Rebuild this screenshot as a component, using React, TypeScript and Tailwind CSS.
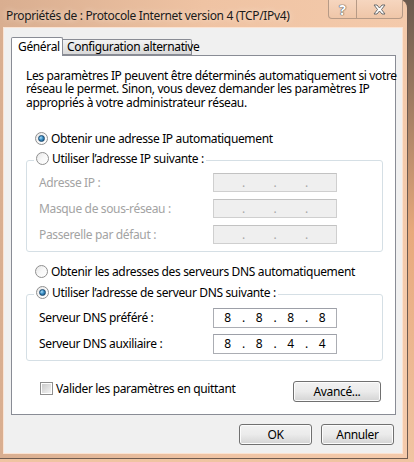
import React from "react";

const font = { fontFamily: '"Noto Sans", "Liberation Sans", sans-serif' };

function Radio({ checked = false }: { checked?: boolean }) {
  return (
    <span className="flex h-[13px] w-[13px] shrink-0 items-center justify-center rounded-full border border-[#8f8f8f] bg-gradient-to-br from-[#e6e6e6] via-[#f8f8f8] to-[#ffffff]">
      {checked && (
        <span className="h-[7px] w-[7px] rounded-full border border-[#1b4a70] bg-[radial-gradient(circle_at_35%_35%,#a9dcf7_0%,#3b8fc6_45%,#0e4670_100%)]" />
      )}
    </span>
  );
}

function Checkbox() {
  return (
    <span className="flex h-[13px] w-[13px] shrink-0 items-center justify-center border border-[#8f8f8f] bg-white">
      <span className="h-[9px] w-[9px] bg-gradient-to-br from-[#cbcbcb] to-[#f4f4f4]" />
    </span>
  );
}

function IpField({ values, disabled = false, h = "h-[19px]" }: { values?: string[]; disabled?: boolean; h?: string }) {
  const cells = values ?? ["", "", "", ""];
  return (
    <div
      className={`flex w-[124px] ${h} items-center border text-[12px] tracking-normal ${
        disabled
          ? "border-[#cfcfcf] border-t-[#c2c2c2] bg-[#efefef] text-[#a8a8a8]"
          : "border-[#abadb3] border-t-[#9da0a8] bg-white text-black"
      }`}
    >
      {cells.map((v, i) => (
        <React.Fragment key={i}>
          <span className="flex-1 text-center">{v}</span>
          {i < 3 && <span className="w-[4px] text-center">.</span>}
        </React.Fragment>
      ))}
    </div>
  );
}

function Row({ label, children, disabled = false }: { label: string; children: React.ReactNode; disabled?: boolean }) {
  return (
    <div className="flex items-center">
      <span className={`w-[174px] ${disabled ? "text-[#a3a3a3]" : "text-black"}`}>{label}</span>
      {children}
    </div>
  );
}

function WinButton({ label, w }: { label: string; w: string }) {
  return (
    <button
      className={`${w} h-[21px] rounded-[3px] border border-[#707070] bg-gradient-to-b from-[#f2f2f2] via-[#ebebeb] to-[#d4d4d4] text-[12px] leading-[15px] text-black shadow-[inset_0_0_0_1px_#fcfcfc]`}
    >
      {label}
    </button>
  );
}

export default function App() {
  return (
    <div
      className="relative h-[462px] w-[414px] overflow-hidden whitespace-nowrap bg-gradient-to-b from-[#6b5a4e] via-[#e7a97c] to-[#f0c4a2] text-[12px] leading-[15px] tracking-[-0.35px]"
      style={font}
    >
      <div className="flex h-[459px] w-[408px] flex-col rounded-tr-[8px] border-b border-r border-[#6e5b50] bg-gradient-to-r from-[#d9ae90] via-[#efc3a3] to-[#f4caab]">
        {/* title bar */}
        <div className="flex h-[28px] items-start justify-between">
          <span className="pl-[6px] pt-[8px] text-[12px] text-[#1a1a1a] [text-shadow:0_0_6px_rgba(255,240,225,0.9)]">
            Propriétés de : Protocole Internet version 4 (TCP/IPv4)
          </span>
          <div className="mr-[4px] flex h-[19px]">
            <div className="flex w-[29px] items-center justify-center rounded-bl-[4px] border border-t-0 border-[#b69a86] bg-gradient-to-b from-[#f6d6bf] to-[#efc6a8]">
              <span className="text-[14px] font-bold text-white [text-shadow:0_0_1px_#555,0_0_1px_#555,0_0_1px_#555]">?</span>
            </div>
            <div className="flex w-[46px] items-center justify-center rounded-br-[4px] border border-l-0 border-t-0 border-[#b69a86] bg-gradient-to-b from-[#f6d6bf] to-[#efc6a8]">
              <svg width="13" height="11" viewBox="0 0 13 11">
                <path
                  d="M1 1h3l2.5 3 2.5-3h3L8.5 5.5 12 10H9L6.5 7 4 10H1l3.5-4.5z"
                  fill="#fff"
                  stroke="#6b6b6b"
                  strokeWidth="1"
                  strokeLinejoin="round"
                />
              </svg>
            </div>
          </div>
        </div>

        {/* client area */}
        <div className="ml-[4px] mr-[5px] flex h-[425px] flex-col bg-[#f0f0f0] pl-[7px] pt-[9px] shadow-[0_0_0_1px_#fbe3d2]">
          {/* tabs */}
          <div className="relative z-10 flex h-[18px] items-end">
            <div className="h-[19px] w-[52px] translate-y-[1px] rounded-t-[2px] border border-b-0 border-[#898c95] bg-white pl-[6px] pt-[1px] text-black">
              Général
            </div>
            <div className="h-[16px] w-[129px] rounded-tr-[2px] border border-l-0 border-[#898c95] bg-gradient-to-b from-[#f3f3f3] to-[#d9d9d9] pl-[4px] leading-[14px] text-black">
              Configuration alternative
            </div>
          </div>

          {/* tab panel */}
          <div className="flex h-[360px] w-[385px] flex-col border border-[#898c95] bg-white pl-[14px] pt-[13px]">
            <p className="leading-[13.3px] text-black">
              Les paramètres IP peuvent être déterminés automatiquement si votre
              <br />
              réseau le permet. Sinon, vous devez demander les paramètres IP
              <br />
              appropriés à votre administrateur réseau.
            </p>

            <div className="ml-[9px] mt-[22px] flex items-center gap-[3px]">
              <Radio checked />
              <span>Obtenir une adresse IP automatiquement</span>
            </div>

            {/* group 1 */}
            <div className="relative mt-[14px] flex h-[92px] w-[357px] flex-col gap-[7px] rounded-[3px] border border-[#d5dfe5] pl-[12px] pt-[12px]">
              <div className="absolute left-[7px] top-[-10px] flex items-center gap-[3px] bg-white px-[2px]">
                <Radio />
                <span>Utiliser l’adresse IP suivante :</span>
              </div>
              <Row label="Adresse IP :" disabled>
                <IpField disabled />
              </Row>
              <Row label="Masque de sous-réseau :" disabled>
                <IpField disabled />
              </Row>
              <Row label="Passerelle par défaut :" disabled>
                <IpField disabled />
              </Row>
            </div>

            <div className="ml-[9px] mt-[12px] flex items-center gap-[3px]">
              <Radio />
              <span>Obtenir les adresses des serveurs DNS automatiquement</span>
            </div>

            {/* group 2 */}
            <div className="relative mt-[15px] flex h-[67px] w-[357px] flex-col gap-[6px] rounded-[3px] border border-[#d5dfe5] pl-[12px] pt-[13px]">
              <div className="absolute left-[7px] top-[-10px] flex items-center gap-[3px] bg-white px-[2px]">
                <Radio checked />
                <span>Utiliser l’adresse de serveur DNS suivante :</span>
              </div>
              <Row label="Serveur DNS préféré :">
                <IpField values={["8", "8", "8", "8"]} h="h-[20px]" />
              </Row>
              <Row label="Serveur DNS auxiliaire :">
                <IpField values={["8", "8", "4", "4"]} h="h-[20px]" />
              </Row>
            </div>

            <div className="mt-[18px] flex w-[357px] items-start justify-between">
              <div className="ml-[14px] mt-[2px] flex items-center gap-[3px]">
                <Checkbox />
                <span>Valider les paramètres en quittant</span>
              </div>
              <div className="mr-[2px] mt-[2px]">
                <WinButton label="Avancé..." w="w-[88px]" />
              </div>
            </div>
          </div>

          {/* bottom buttons */}
          <div className="mr-[8px] mt-[9px] flex justify-end gap-[9px]">
            <WinButton label="OK" w="w-[73px]" />
            <WinButton label="Annuler" w="w-[73px]" />
          </div>
        </div>
      </div>
    </div>
  );
}
